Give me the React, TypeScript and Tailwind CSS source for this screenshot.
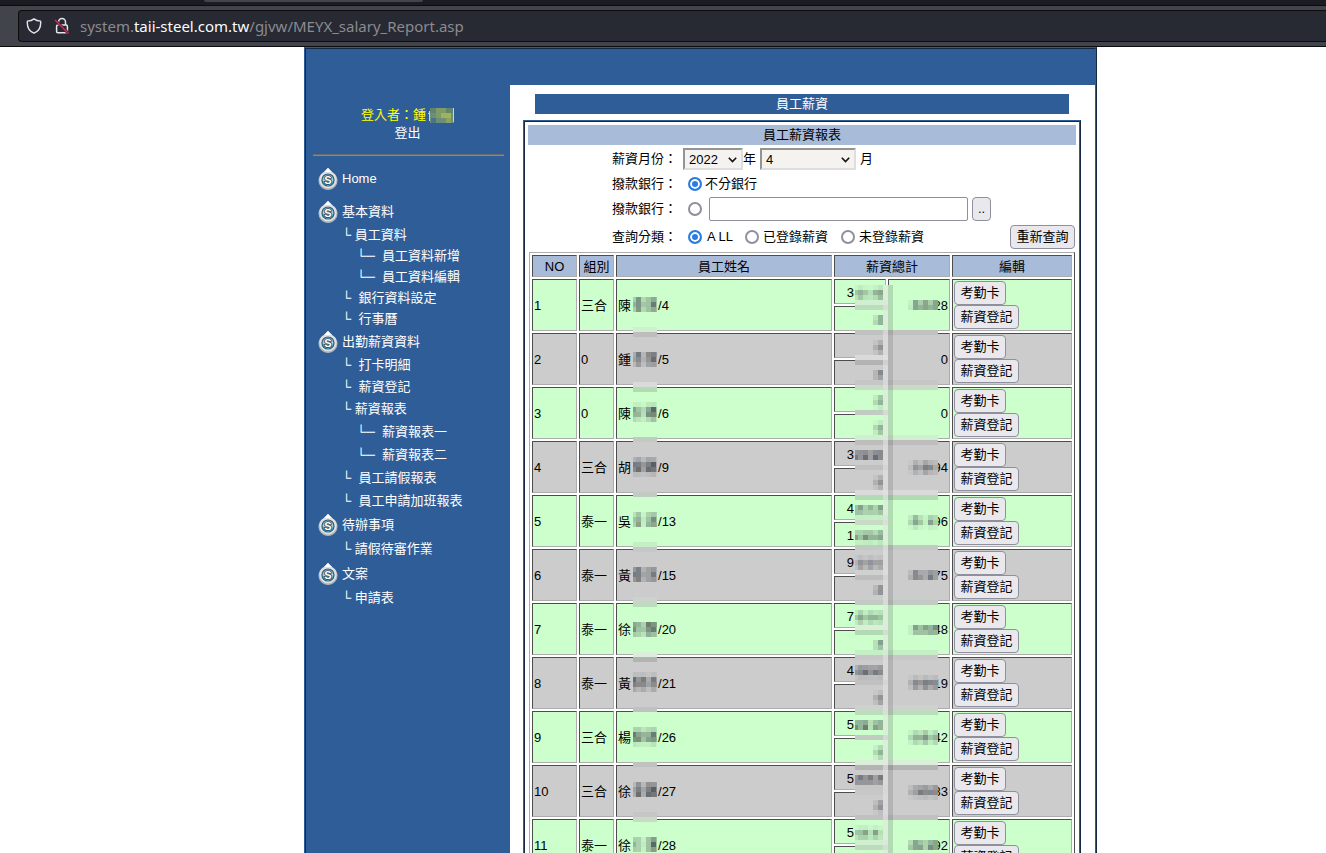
import React, { FC } from 'react'

interface MenuRow {
  label: string
  branch: string
  height: string
}

interface MenuSection {
  title: string
  rows: MenuRow[]
}

interface Employee {
  no: number
  group: string
  surname: string
  id: number
  base: string
  extra: string
  total: string
  nameTones: number[]
  baseTones: number[]
  extraTones: number[]
  totalTones: number[]
}

const L1 = '└\u00a0'
const L1_WIDE = '└\u00a0\u00a0'
const L2 = '\u00a0\u00a0\u00a0\u00a0└─\u00a0\u00a0'

const sections: MenuSection[] = [
  {
    title: '基本資料',
    rows: [
      { label: '員工資料', branch: L1, height: 'h-[21px]' },
      { label: '員工資料新增', branch: L2, height: 'h-[21px]' },
      { label: '員工資料編輯', branch: L2, height: 'h-[21px]' },
      { label: '銀行資料設定', branch: L1_WIDE, height: 'h-[21px]' },
      { label: '行事曆', branch: L1_WIDE, height: 'h-[21px]' },
    ],
  },
  {
    title: '出勤薪資資料',
    rows: [
      { label: '打卡明細', branch: L1_WIDE, height: 'h-[22px]' },
      { label: '薪資登記', branch: L1_WIDE, height: 'h-[22px]' },
      { label: '薪資報表', branch: L1, height: 'h-[22px]' },
      { label: '薪資報表一', branch: L2, height: 'h-[23px]' },
      { label: '薪資報表二', branch: L2, height: 'h-[23px]' },
      { label: '員工請假報表', branch: L1_WIDE, height: 'h-[23px]' },
      { label: '員工申請加班報表', branch: L1_WIDE, height: 'h-[23px]' },
    ],
  },
  { title: '待辦事項', rows: [{ label: '請假待審作業', branch: L1, height: 'h-6' }] },
  { title: '文案', rows: [{ label: '申請表', branch: L1, height: 'h-6' }] },
]

const ZERO = [2, 5]

const employees: Employee[] = [
  { no: 1, group: '三合', surname: '陳', id: 4, base: '3', extra: '', total: '28', nameTones: [4, 7, 3, 4, 7, 4], baseTones: [3, 5, 3, 2, 4, 6], extraTones: ZERO, totalTones: [1, 6, 4, 6, 4, 6] },
  { no: 2, group: '0', surname: '鍾', id: 5, base: '', extra: '', total: '0', nameTones: [3, 6, 2, 5, 7, 4], baseTones: ZERO, extraTones: ZERO, totalTones: [] },
  { no: 3, group: '0', surname: '陳', id: 6, base: '', extra: '', total: '0', nameTones: [5, 4, 2, 6, 8, 4], baseTones: ZERO, extraTones: ZERO, totalTones: [] },
  { no: 4, group: '三合', surname: '胡', id: 9, base: '3', extra: '', total: '94', nameTones: [6, 7, 4, 7, 8, 3], baseTones: [6, 5, 7, 4, 7, 6], extraTones: ZERO, totalTones: [1, 5, 3, 7, 5, 3] },
  { no: 5, group: '泰一', surname: '吳', id: 13, base: '4', extra: '1', total: '96', nameTones: [3, 5, 1, 4, 6, 4], baseTones: [4, 5, 3, 4, 3, 5], extraTones: [5, 4, 6, 5, 4, 6], totalTones: [2, 6, 3, 1, 5, 3] },
  { no: 6, group: '泰一', surname: '黃', id: 15, base: '9', extra: '', total: '75', nameTones: [6, 7, 3, 4, 6, 3], baseTones: [2, 5, 3, 5, 3, 4], extraTones: ZERO, totalTones: [2, 6, 4, 3, 6, 4] },
  { no: 7, group: '泰一', surname: '徐', id: 20, base: '7', extra: '', total: '48', nameTones: [6, 4, 3, 7, 7, 5], baseTones: [3, 6, 3, 5, 4, 4], extraTones: ZERO, totalTones: [1, 5, 4, 5, 5, 6] },
  { no: 8, group: '泰一', surname: '黃', id: 21, base: '4', extra: '', total: '19', nameTones: [7, 5, 6, 3, 6, 4], baseTones: [4, 6, 7, 5, 6, 6], extraTones: ZERO, totalTones: [2, 6, 4, 7, 5, 6] },
  { no: 9, group: '三合', surname: '楊', id: 26, base: '5', extra: '', total: '42', nameTones: [7, 6, 4, 5, 7, 4], baseTones: [6, 5, 7, 2, 5, 5], extraTones: ZERO, totalTones: [2, 5, 4, 7, 3, 5] },
  { no: 10, group: '三合', surname: '徐', id: 27, base: '5', extra: '', total: '83', nameTones: [3, 7, 3, 7, 8, 6], baseTones: [5, 6, 5, 6, 4, 6], extraTones: ZERO, totalTones: [2, 4, 6, 6, 5, 6] },
  { no: 11, group: '泰一', surname: '徐', id: 28, base: '5', extra: '', total: '92', nameTones: [4, 3, 1, 4, 8, 4], baseTones: [3, 4, 5, 2, 5, 2], extraTones: ZERO, totalTones: [3, 6, 5, 3, 6, 6] },
]

const GREEN = [204, 255, 204]
const GREY = [204, 204, 204]
const WHITE = [255, 255, 255]
const DARK = [77, 77, 77]
const LIGHT = [172, 172, 172]

const FIRST_ROW = 27
const PITCH = 54

// colour of one scan line of the table body, with or without the split salary cell
const lineColour = (y: number, split: boolean) => {
  const row = Math.floor((y - FIRST_ROW) / PITCH)
  const offset = (y - FIRST_ROW) % PITCH
  if (offset >= 52) return WHITE
  if (split && (offset === 25 || offset === 26)) return WHITE
  if (offset === 0 || (split && offset === 27)) return DARK
  if (offset === 51 || (split && offset === 24)) return LIGHT
  return row % 2 === 0 ? GREEN : GREY
}

const average = (colours: number[][]) => {
  const sum = [0, 1, 2].map((c) => Math.round(colours.reduce((acc, v) => acc + v[c], 0) / colours.length))
  return `rgb(${sum[0]},${sum[1]},${sum[2]})`
}

interface StripProps {
  x: number
  width: number
  start: number
  end: number
  split?: boolean
  // colours of the pixel columns that are not cell background
  columns?: number[][]
}

const Strip: FC<StripProps> = ({ x, width, start, end, split = false, columns = [] }) => {
  const bands: number[] = []
  for (let y = start; y < end; y += 5) bands.push(y)
  return (
    <>
      {bands.map((y) => {
        const lines = [0, 1, 2, 3, 4].map((d) => lineColour(y + d, split))
        const pixels = lines.flatMap((line) => [...columns, ...Array(5 - columns.length).fill(line)])
        return <rect key={y} x={x} y={y} width={width} height={5} fill={average(pixels)} />
      })}
    </>
  )
}

interface BlocksProps {
  xs: number[]
  tones: number[]
  top: number
  bottom: number
  phase: number
}

const Blocks: FC<BlocksProps> = ({ xs, tones, top, bottom, phase }) => {
  const bands: number[] = []
  for (let y = Math.floor((top - phase) / 5) * 5 + phase; y < bottom; y += 5) bands.push(y)
  return (
    <>
      {bands.map((y, b) =>
        tones.map((tone, i) => {
          const cover = (Math.min(y + 5, bottom) - Math.max(y, top)) / 5
          return (
            <rect
              key={`${y}-${i}`}
              x={xs[i]}
              y={y}
              width={xs[i + 1] - xs[i]}
              height={5}
              fill={(i + b) % 3 === 0 ? '#4a4440' : '#3a4450'}
              fillOpacity={(tone / 10) * cover * ((i + b) % 2 ? 1 : 0.8)}
            />
          )
        })
      )}
    </>
  )
}

const NAME_XS = [104, 107, 112, 117, 122, 127, 128]
const BASE_XS = [326, 329, 334, 339, 344, 349, 354]
const ZERO_XS = [344, 349, 354]
const TOTAL_XS = [379, 384, 389, 394, 399, 404, 409]

const Mosaic: FC = () => {
  const height = FIRST_ROW + PITCH * employees.length
  return (
    <svg className="pointer-events-none absolute left-0 top-0" width={546} height={height} shapeRendering="crispEdges" aria-hidden="true">
      <Strip x={104} width={24} start={30} end={height} />
      <Strip x={364} width={45} start={33} end={height} />
      <Strip x={326} width={28} start={33} end={height} split />
      <Strip x={354} width={5} start={33} end={height} split columns={[LIGHT, WHITE, WHITE]} />
      <Strip x={359} width={5} start={33} end={height} columns={[DARK]} />
      {employees.map((e, i) => {
        const top = FIRST_ROW + PITCH * i
        return (
          <g key={e.no}>
            <Blocks xs={NAME_XS} tones={e.nameTones} top={top + 19} bottom={top + 32} phase={0} />
            <Blocks xs={e.base ? BASE_XS : ZERO_XS} tones={e.baseTones} top={top + 10} bottom={top + 19} phase={3} />
            <Blocks xs={e.extra ? BASE_XS : ZERO_XS} tones={e.extraTones} top={top + 37} bottom={top + 46} phase={3} />
            <Blocks xs={TOTAL_XS} tones={e.totalTones} top={top + 22} bottom={top + 31} phase={3} />
          </g>
        )
      })}
    </svg>
  )
}

const DropIcon: FC = () => (
  <svg width="22" height="24" viewBox="0 0 22 24" className="shrink-0" aria-hidden="true">
    <path d="M11 1L15.500 5.200A9.500 9.500 0 1 1 6.500 5.200Z" fill="#aeb4b8" />
    <path d="M11 1L15.300 5.200A8.600 8.600 0 1 1 6.700 5.200Z" fill="#dfe2e3" />
    <path d="M11 1L14.500 5H7.500Z" fill="#ffffff" />
    <circle cx="11" cy="13" r="6.600" fill="#2b5d78" />
    <circle cx="11" cy="13" r="5.400" fill="#a9cfdf" />
    <path d="M5.800 14.500A5.400 5.400 0 0 0 16.200 14.500Z" fill="#3fa0cc" />
    <text x="11" y="17" textAnchor="middle" fontSize="11" fontWeight="bold" fontFamily="Liberation Sans, sans-serif" fill="#ffffff" stroke="#24485c" strokeWidth="1.600" paintOrder="stroke">
      S
    </text>
  </svg>
)

const BrowserBar: FC = () => (
  <header className="shrink-0 bg-[#42444b]">
    <div className="h-[6px] border-b border-[#0c0c0d] bg-[#1b1c21]">
      <div className="ml-[204px] h-[2px] w-[219px] rounded-b-sm bg-[#42444b]" />
    </div>
    <div className="border-b border-[#0c0c0d] py-1 pl-[18px]">
      <div className="flex h-8 items-center rounded-l border border-r-0 border-[#0c0c0d] bg-[#272933] pl-[7px]">
        <svg width="16" height="16" viewBox="0 0 16 16" fill="none" stroke="#e6e6ea" strokeWidth="1.4" strokeLinejoin="round" aria-hidden="true">
          <path d="M8 .9C6.4 2.2 4 3 1.4 3.1C.9 8 2.4 12.800 8 15.200C13.600 12.800 15.100 8 14.600 3.100C12 3 9.600 2.200 8 .9Z" />
        </svg>
        <svg className="ml-3" width="16" height="18" viewBox="0 0 16 18" fill="none" stroke="#e6e6ea" strokeWidth="1.5" aria-hidden="true">
          <path d="M4.500 8V5A3.500 3.500 0 0 1 11.500 5V8" />
          <rect x="2.600" y="8" width="10.800" height="7.800" rx="1.200" />
          <path d="M1 3L14.500 16.500" stroke="#272933" strokeWidth="3" />
          <path d="M1 3L14.500 16.500" stroke="#e22850" strokeWidth="1.400" />
        </svg>
        <span className="ml-[10px] font-['Noto_Sans',sans-serif] text-[15px] text-[#8b8b90]">
          system.<span className="text-[#fbfbfe]">taii-steel.com.tw</span>/gjvw/MEYX_salary_Report.asp
        </span>
      </div>
    </div>
  </header>
)

const Sidebar: FC = () => (
  <nav className="w-[204px] shrink-0 pl-[7px] pr-[6px] pt-[21px] text-white">
    <div className="pr-[2px] text-center leading-[18px]">
      <div className="flex items-center justify-center text-[#ffff00]">
        登入者：鍾
        <svg className="ml-[2px]" width="26" height="15" shapeRendering="crispEdges" aria-hidden="true">
          <path d="M1 3V13M0 5H2" stroke="#e8ee20" />
          <rect x="2" width="24" height="15" fill="#6d8e78" />
          <rect x="2" width="24" height="5" fill="#62856f" />
          <rect x="8" width="10" height="10" fill="#7f9c68" />
          <rect x="13" y="5" width="10" height="5" fill="#9fb357" />
          <rect x="18" y="10" width="5" height="5" fill="#8ba561" />
          <rect x="3" y="10" width="5" height="5" fill="#4c7388" />
          <rect x="25" width="1" height="14" fill="#e2ea22" />
        </svg>
      </div>
      <a href="#logout">登出</a>
    </div>
    <hr className="mt-3 h-[2px] border-0 border-t border-t-[#6b6b6b] bg-[#9a8478]" />
    <ul className="pl-1 pt-[11px]">
      <li className="mb-2 flex h-6 items-center gap-[3px]">
        <DropIcon />
        <a href="#home">Home</a>
      </li>
      {sections.map((section) => (
        <li key={section.title}>
          <div className="flex h-[25px] items-center gap-[3px]">
            <DropIcon />
            <a href="#section">{section.title}</a>
          </div>
          <ul className="pl-[25px]">
            {section.rows.map((row) => (
              <li key={row.label} className={`flex items-center whitespace-nowrap ${row.height}`}>
                <span>{row.branch}</span>
                <a href="#page">{row.label}</a>
              </li>
            ))}
          </ul>
        </li>
      ))}
    </ul>
  </nav>
)

const radioClass =
  'size-[14px] shrink-0 appearance-none rounded-full border-2 border-[#8f8f9d] bg-white checked:border-[#2a7de1] checked:bg-[#2a7de1] checked:shadow-[inset_0_0_0_2px_#fff]'
const buttonClass = 'block h-6 rounded border border-[#8f8f9d] bg-[#e9e9ed] text-center text-black'

interface PickerProps {
  label: string
  value: string
  width: string
}

const Picker: FC<PickerProps> = ({ label, value, width }) => (
  <span className={`relative h-[22px] ${width}`}>
    <select
      aria-label={label}
      defaultValue={value}
      className="h-full w-full appearance-none border-2 border-b-[#dedede] border-l-[#949494] border-r-[#dedede] border-t-[#949494] bg-[#f4f3f0] pl-1 text-black"
    >
      <option>{value}</option>
    </select>
    <svg className="pointer-events-none absolute right-[6px] top-[9px]" width="9" height="6" viewBox="0 0 9 6" fill="none" stroke="#111" strokeWidth="1.6" aria-hidden="true">
      <path d="M.8 .8L4.500 4.500L8.200 .8" />
    </svg>
  </span>
)

const Filters: FC = () => (
  <form className="pl-[84px]">
    <div className="flex h-[27px] items-center">
      <span className="w-[71px]">薪資月份：</span>
      <Picker label="年" value="2022" width="w-[60px]" />
      <span className="w-[17px]">年</span>
      <Picker label="月" value="4" width="w-24" />
      <span className="ml-1">月</span>
    </div>
    <div className="flex h-6 items-center">
      <span className="w-[76px]">撥款銀行：</span>
      <input type="radio" name="bank" id="bank-all" defaultChecked className={radioClass} />
      <label htmlFor="bank-all" className="ml-[3px]">不分銀行</label>
    </div>
    <div className="flex h-[26px] items-center">
      <span className="w-[76px]">撥款銀行：</span>
      <input type="radio" name="bank" aria-label="指定銀行" className={radioClass} />
      <input type="text" aria-label="撥款銀行" className="ml-[7px] h-6 w-[259px] rounded-xs border border-[#8f8f9d] bg-white px-1" />
      <button type="button" className={`${buttonClass} ml-1 w-[19px]`}>..</button>
    </div>
    <div className="flex h-[30px] items-center">
      <span className="w-[76px]">查詢分類：</span>
      <input type="radio" name="kind" id="kind-all" defaultChecked className={radioClass} />
      <label htmlFor="kind-all" className="ml-[5px] w-[38px]">A LL</label>
      <input type="radio" name="kind" id="kind-done" className={radioClass} />
      <label htmlFor="kind-done" className="ml-1 w-[78px]">已登錄薪資</label>
      <input type="radio" name="kind" id="kind-open" className={radioClass} />
      <label htmlFor="kind-open" className="ml-1">未登錄薪資</label>
      <button type="button" className={`${buttonClass} ml-auto mr-px w-[65px]`}>重新查詢</button>
    </div>
  </form>
)

const edge = 'border border-b-[#acacac] border-l-[#4d4d4d] border-r-[#acacac] border-t-[#4d4d4d]'
const headCell = `${edge} px-px pb-px pt-[3px] font-normal`
const textCell = `${edge} px-px pb-px pt-[3px]`

const SalaryTable: FC = () => (
  <div className="relative mx-px">
    <table className="w-full table-fixed border-separate border-spacing-[2px] border border-b-[#4d4d4d] border-l-[#acacac] border-r-[#4d4d4d] border-t-[#acacac]">
      <colgroup>
        <col className="w-[45px]" />
        <col className="w-[35px]" />
        <col />
        <col className="w-[52px]" />
        <col className="w-[62px]" />
        <col className="w-[120px]" />
      </colgroup>
      <thead>
        <tr className="h-[22px] bg-[#a8bbd8] leading-[16px]">
          <th className={headCell}>NO</th>
          <th className={headCell}>組別</th>
          <th className={headCell}>員工姓名</th>
          <th colSpan={2} className={headCell}>薪資總計</th>
          <th className={headCell}>編輯</th>
        </tr>
      </thead>
      <tbody className="leading-[18px]">
        {employees.map((e, i) => {
          const fill = i % 2 === 0 ? 'bg-[#ccffcc]' : 'bg-[#cccccc]'
          return (
            <React.Fragment key={e.no}>
              <tr className={`h-[25px] ${fill}`}>
                <td rowSpan={2} className={textCell}>{e.no}</td>
                <td rowSpan={2} className={textCell}>{e.group}</td>
                <td rowSpan={2} className={textCell}>
                  {e.surname}
                  <span className="inline-block w-[27px]" />/{e.id}
                </td>
                <td className={`${textCell} text-right`}>
                  {e.base}
                  <span className="inline-block w-[30px]" />
                </td>
                <td rowSpan={2} className={`${textCell} text-right`}>{e.total}</td>
                <td rowSpan={2} className={`${edge} p-px`}>
                  <button type="button" className={`${buttonClass} w-[52px]`}>考勤卡</button>
                  <button type="button" className={`${buttonClass} w-[65px]`}>薪資登記</button>
                </td>
              </tr>
              <tr className={`h-[25px] ${fill}`}>
                <td className={`${textCell} text-right`}>
                  {e.extra}
                  <span className="inline-block w-[30px]" />
                </td>
              </tr>
            </React.Fragment>
          )
        })}
      </tbody>
    </table>
    <Mosaic />
  </div>
)

export default function App() {
  return (
    <div className="flex h-screen flex-col overflow-hidden bg-white">
      <BrowserBar />
      <div className="ml-[304px] flex min-h-0 max-w-[793px] grow flex-col overflow-hidden border-2 border-b-0 border-[#2f5d98] bg-[#2f5d98] font-['Liberation_Sans','Noto_Sans_CJK_TC',sans-serif] text-[13px] leading-[20px] text-black [border-style:ridge]">
        <div className="h-9 shrink-0" />
        <div className="flex min-h-0 grow">
          <Sidebar />
          <main className="min-w-0 grow bg-white pl-[13px] pr-[14px] pt-[9px]">
            <h1 className="mx-3 bg-[#2f5d98] text-center text-white">員工薪資</h1>
            <section className="mt-[6px] border-2 border-[#2f5d98] px-[3px] pt-[3px] [border-style:ridge]">
              <h2 className="bg-[#a8bbd8] text-center">員工薪資報表</h2>
              <Filters />
              <SalaryTable />
            </section>
          </main>
        </div>
      </div>
    </div>
  )
}
